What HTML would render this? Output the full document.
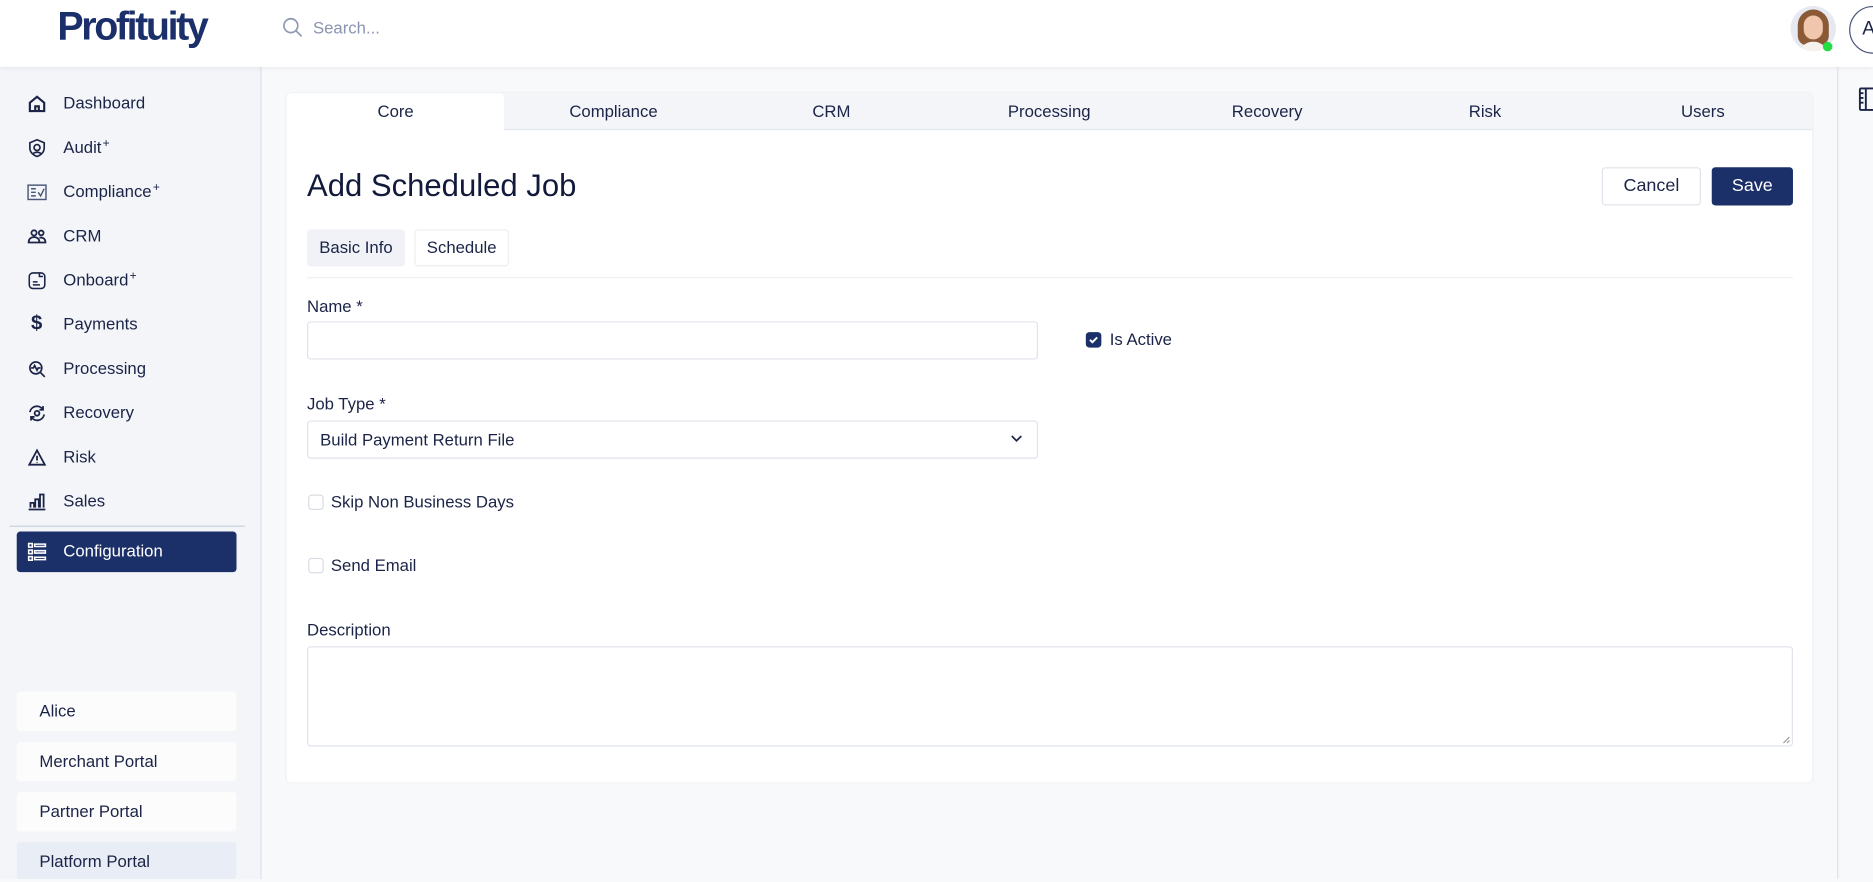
<!DOCTYPE html>
<html><head><meta charset="utf-8"><style>
*{box-sizing:border-box;margin:0;padding:0}
html,body{width:1873px;height:879px;overflow:hidden;background:#f8f9fb}
body{font-family:"Liberation Sans",sans-serif;color:#1b2447}
#w{position:absolute;left:0;top:0;width:1568px;height:736px;transform:scale(1.19452);transform-origin:0 0;font-size:14px}
.a{position:absolute}
.hdr{left:0;top:0;width:1568px;height:56px;background:#fff;box-shadow:0 1px 4px rgba(20,30,60,.08);z-index:2}
.logo{left:48px;top:3px;font-size:33px;font-weight:bold;color:#1b2f6b;letter-spacing:-2px}
.side{left:0;top:56px;width:219px;height:680px;background:#f3f5f9;border-right:1px solid #dde1eb}
.it{position:absolute;left:0;width:219px;height:20px;line-height:20px}
.it span{position:absolute;left:53px;top:0;font-size:14px;color:#1b2447}
.it span.sp{position:relative;left:1px;top:-5px;font-size:10px}
.it svg{position:absolute;left:22px;top:2px}
.pb{position:absolute;left:14px;width:184px;height:33px;background:#fcfcfd;border-radius:3px;line-height:33px;padding-left:19px;font-size:14px}
.card{left:240px;top:78px;width:1277px;height:577px;background:#fff;border-radius:4px;box-shadow:0 0 2px rgba(0,0,0,.08)}
.tabs{position:absolute;left:0;top:0;width:1277px;height:31px;background:#f3f5f9;border-bottom:1px solid #e2e6ee;border-radius:4px 4px 0 0}
.tab{position:absolute;top:0;width:182.4px;height:31px;line-height:31px;text-align:center;font-size:14px}
.lbl{position:absolute;font-size:14px;color:#1b2447}
.inp{position:absolute;border:1px solid #dfe3ea;border-radius:3px;background:#fff}
.cb{position:absolute;width:13px;height:13px;border:1px solid #d8dce4;border-radius:3px;background:#fff}
</style></head><body><div id="w">
<div class="a hdr">
 <div class="a logo">Profituity</div>
 <svg class="a" style="left:236px;top:14px" width="18" height="18" viewBox="0 0 18 18"><circle cx="7.5" cy="7.5" r="5.8" fill="none" stroke="#8d96b3" stroke-width="1.4"/><path d="M11.8 11.8L16.5 16.5" stroke="#8d96b3" stroke-width="1.4"/></svg>
 <div class="a" style="left:262px;top:15px;color:#8a93b0;font-size:14px">Search...</div>
 <div class="a" style="left:1499px;top:5px;width:38px;height:38px;border-radius:50%;background:#e6e9f2;overflow:hidden">
  <div class="a" style="left:6px;top:3px;width:26px;height:30px;border-radius:13px 13px 8px 8px;background:#8a5a36"></div>
  <div class="a" style="left:11px;top:8px;width:16px;height:20px;border-radius:8px;background:#f0c7ac"></div>
  <div class="a" style="left:8px;top:30px;width:22px;height:10px;border-radius:10px 10px 0 0;background:#f4f1ef"></div>
 </div>
 <div class="a" style="left:1526px;top:35px;width:8px;height:8px;border-radius:50%;background:#22dd44"></div>
 <div class="a" style="left:1548px;top:5px;width:40px;height:40px;border-radius:50%;border:1px solid #4a5578;font-size:16px;line-height:38px;padding-left:10px;color:#1b2447">A</div>
</div>
<div class="a side">
 <div class="it" style="top:20px"><svg width="18" height="18" viewBox="0 0 18 18" fill="none" stroke="#1b2447" stroke-width="1.8"><path d="M3 8L9 3l6 5v7H3z"/><path d="M7.5 15v-4h3v4"/></svg><span>Dashboard</span></div>
 <div class="it" style="top:57px"><svg width="18" height="18" viewBox="0 0 18 18" fill="none" stroke="#1b2447" stroke-width="1.4"><path d="M9 2l6 2.5v4.5c0 3.5-3 6-6 7-3-1-6-3.5-6-7V4.5z"/><circle cx="9" cy="8.5" r="2.5"/><path d="M5.5 14c1-2 6-2 7 0"/></svg><span>Audit<span class="sp">+</span></span></div>
 <div class="it" style="top:94px"><svg width="18" height="18" viewBox="0 0 18 18" fill="none" stroke="#4a5578" stroke-width="1.2"><rect x="1.5" y="3" width="15" height="12"/><path d="M4 6h4M4 9h4M4 12h4M10 9l2 3 3-6"/></svg><span>Compliance<span class="sp">+</span></span></div>
 <div class="it" style="top:131px"><svg width="18" height="18" viewBox="0 0 18 18" fill="none" stroke="#1b2447" stroke-width="1.5"><circle cx="6.5" cy="6" r="2.2"/><circle cx="12.5" cy="6" r="2"/><path d="M2 14c0-3 2-4.5 4.5-4.5S11 11 11 14zM11 10c2.5-.5 5 .5 5 4h-5"/></svg><span>CRM</span></div>
 <div class="it" style="top:168px"><svg width="18" height="18" viewBox="0 0 18 18" fill="none" stroke="#1b2447" stroke-width="1.3"><rect x="2.5" y="2.5" width="13" height="13" rx="3"/><path d="M5.5 10h4M5.5 12.5h6M11 2.5v3h3"/></svg><span>Onboard<span class="sp">+</span></span></div>
 <div class="it" style="top:205px"><span style="left:26px;font-weight:bold;font-size:17px">$</span><span>Payments</span></div>
 <div class="it" style="top:242px"><svg width="18" height="18" viewBox="0 0 18 18" fill="none" stroke="#1b2447" stroke-width="1.4"><circle cx="8" cy="8" r="5"/><path d="M11.5 11.5L15.5 15.5M4 8h2l1-2 2 4 1-2h2"/></svg><span>Processing</span></div>
 <div class="it" style="top:279px"><svg width="18" height="18" viewBox="0 0 18 18" fill="none" stroke="#1b2447" stroke-width="1.5"><path d="M3 8a6 6 0 0 1 11-2M15 10a6 6 0 0 1-11 2"/><circle cx="9" cy="9" r="2"/><path d="M14 3v3h-3M4 15v-3h3"/></svg><span>Recovery</span></div>
 <div class="it" style="top:316px"><svg width="18" height="18" viewBox="0 0 18 18" fill="none" stroke="#1b2447" stroke-width="1.5"><path d="M9 3L2.5 15h13z"/><path d="M9 7.5v4M9 13v.5"/></svg><span>Risk</span></div>
 <div class="it" style="top:353px"><svg width="18" height="18" viewBox="0 0 18 18" fill="none" stroke="#1b2447" stroke-width="1.5"><path d="M2 15.5h14M3.5 14V10h3v4M7.5 14V7h3v7M11.5 14V3h3v11"/></svg><span>Sales</span></div>
 <div class="a" style="left:8px;top:384px;width:197px;height:1px;background:#c9cfdc"></div>
 <div class="a" style="left:14px;top:389px;width:184px;height:34px;background:#1b3068;border-radius:3px">
  <svg class="a" style="left:9px;top:9px" width="16" height="16" viewBox="0 0 16 16" fill="none" stroke="#fff" stroke-width="1.3"><rect x="1" y="1" width="3" height="3"/><rect x="1" y="6.5" width="3" height="3"/><rect x="1" y="12" width="3" height="3"/><path d="M6 1.5h9v2H6zM6 7h9v2H6zM6 12.5h9v2H6z"/></svg>
  <div class="a" style="left:39px;top:8px;color:#fff;font-size:14px">Configuration</div>
 </div>
 <div class="pb" style="top:523px">Alice</div>
 <div class="pb" style="top:565px">Merchant Portal</div>
 <div class="pb" style="top:607px">Partner Portal</div>
 <div class="pb" style="top:649px;background:#e9edf5;height:31px">Platform Portal</div>
</div>
<div class="a" style="left:1538px;top:56px;width:1px;height:680px;background:#dde1eb"></div>
<svg class="a" style="left:1556px;top:73px" width="14" height="20" viewBox="0 0 14 20" fill="none" stroke="#1b2447" stroke-width="1.6"><rect x="1" y="1" width="12" height="18" rx="1"/><path d="M6 1v18M1 5h3M1 9h3M1 13h3"/></svg>
<div class="a card">
 <div class="tabs">
  <div class="tab" style="left:0;background:#fff;height:32px;border-radius:4px 4px 0 0">Core</div>
  <div class="tab" style="left:182.4px">Compliance</div>
  <div class="tab" style="left:364.8px">CRM</div>
  <div class="tab" style="left:547.2px">Processing</div>
  <div class="tab" style="left:729.6px">Recovery</div>
  <div class="tab" style="left:912px">Risk</div>
  <div class="tab" style="left:1094.4px">Users</div>
 </div>
 <div class="lbl" style="left:17px;top:62px;font-size:26px;color:#111a3a">Add Scheduled Job</div>
 <div class="a" style="left:1101px;top:62px;width:83px;height:32px;border:1px solid #dfe3ea;border-radius:3px;text-align:center;line-height:30px;font-size:15px">Cancel</div>
 <div class="a" style="left:1193px;top:62px;width:68px;height:32px;background:#1b3068;border-radius:3px;text-align:center;line-height:32px;font-size:15px;color:#fff">Save</div>
 <div class="a" style="left:17px;top:114px;width:82px;height:31px;background:#f0f2f7;border-radius:3px;text-align:center;line-height:31px">Basic Info</div>
 <div class="a" style="left:107px;top:114px;width:79px;height:31px;border:1px solid #eceef3;border-radius:3px;text-align:center;line-height:29px">Schedule</div>
 <div class="a" style="left:17px;top:154px;width:1244px;height:1px;background:#eceef3"></div>
 <div class="lbl" style="left:17px;top:170px">Name *</div>
 <div class="inp" style="left:17px;top:191px;width:612px;height:32px"></div>
 <div class="a" style="left:669px;top:200px;width:13px;height:13px;background:#1b3068;border-radius:3px"><svg class="a" style="left:2px;top:2px" width="9" height="9" viewBox="0 0 9 9"><path d="M1.5 4.5l2 2 4-4" stroke="#fff" stroke-width="1.6" fill="none"/></svg></div>
 <div class="lbl" style="left:689px;top:198px">Is Active</div>
 <div class="lbl" style="left:17px;top:252px">Job Type *</div>
 <div class="inp" style="left:17px;top:274px;width:612px;height:32px"></div>
 <div class="lbl" style="left:28px;top:282px">Build Payment Return File</div>
 <svg class="a" style="left:606px;top:285px" width="10" height="8" viewBox="0 0 10 8"><path d="M1 2l4 4 4-4" stroke="#1b2447" stroke-width="1.4" fill="none"/></svg>
 <div class="cb" style="left:18px;top:336px"></div>
 <div class="lbl" style="left:37px;top:334px">Skip Non Business Days</div>
 <div class="cb" style="left:18px;top:389px"></div>
 <div class="lbl" style="left:37px;top:387px">Send Email</div>
 <div class="lbl" style="left:17px;top:441px">Description</div>
 <div class="inp" style="left:17px;top:463px;width:1244px;height:84px"></div>
 <svg class="a" style="left:1252px;top:538px" width="7" height="7" viewBox="0 0 7 7"><path d="M6 1L1 6M6 4L4 6" stroke="#999" stroke-width="1"/></svg>
</div>
</div></body></html>
